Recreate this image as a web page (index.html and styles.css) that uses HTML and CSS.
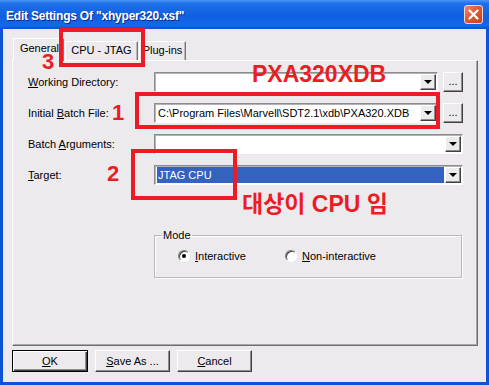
FILE: index.html
```html
<!DOCTYPE html>
<html lang="ko">
<head>
<meta charset="UTF-8">
<meta name="viewport" content="width=device-width, initial-scale=1.0">
<title>Edit Settings Of "xhyper320.xsf"</title>
<link rel="stylesheet" href="styles.css">
</head>
<body>
    <div class="window">
        <div class="titlebar">
            <span class="title">Edit Settings Of "xhyper320.xsf"</span>
            <span class="close">
                <svg width="11" height="11" viewBox="0 0 11 11">
                    <path d="M1.5 1.5 L9.5 9.5 M9.5 1.5 L1.5 9.5" stroke="#fff" stroke-width="2.2" stroke-linecap="round"/>
                </svg>
            </span>
        </div>

        <div class="frame">
            <div class="tabs">
                <div class="tab active">General</div>
                <div class="tab tab-cpu">CPU - JTAG</div>
                <div class="tab tab-plug">Plug-ins</div>
            </div>

            <div class="panel">
                <div class="row">
                    <label><u>W</u>orking Directory:</label>
                    <div class="combo"><span class="value"></span><span class="drop"></span></div>
                    <button class="more">...</button>
                </div>
                <div class="row">
                    <label>Initial <u>B</u>atch File:</label>
                    <div class="combo"><span class="value">C:\Program Files\Marvell\SDT2.1\xdb\PXA320.XDB</span><span class="drop"></span></div>
                    <button class="more">...</button>
                </div>
                <div class="row">
                    <label>Batch <u>A</u>rguments:</label>
                    <div class="combo"><span class="value"></span><span class="drop"></span></div>
                </div>
                <div class="row">
                    <label><u>T</u>arget:</label>
                    <div class="combo selected"><span class="value">JTAG CPU</span><span class="drop"></span></div>
                </div>

                <fieldset class="mode">
                    <legend>Mode</legend>
                    <div class="radios">
                        <div class="option first"><span class="radio checked"></span><u>I</u>nteractive</div>
                        <div class="option"><span class="radio"></span><u>N</u>on-interactive</div>
                    </div>
                </fieldset>
            </div>

            <div class="buttons">
                <button class="btn default"><u>O</u>K</button>
                <button class="btn"><u>S</u>ave As ...</button>
                <button class="btn"><u>C</u>ancel</button>
            </div>
        </div>

        <!-- annotations drawn over the screenshot -->
        <div class="mark box-tab"></div>
        <div class="mark box-batch"></div>
        <div class="mark box-target"></div>
        <span class="note num-3">3</span>
        <span class="note num-1">1</span>
        <span class="note num-2">2</span>
        <span class="note big pxa">PXA320XDB</span>
        <span class="note big kor">대상이 CPU 임</span>
    </div>
</body>
</html>
```

FILE: styles.css
```css
body {
    margin: 0;
    font-family: "Liberation Sans", Arial, sans-serif;
    font-size: 11px;
    color: #000;
}

.window {
    position: relative;
    width: 489px;
    height: 385px;
    display: flex;
    flex-direction: column;
    overflow: hidden;
    background: #edeaee;
}

.titlebar {
    height: 29px;
    flex: none;
    display: flex;
    align-items: center;
    justify-content: space-between;
    padding: 0 6px;
    background: linear-gradient(to bottom, #4a95f4 0, #1f70ea 12%, #0f5fe0 55%, #1468ea 88%, #0b4fd2 100%);
}

.title {
    color: #fff;
    font-weight: bold;
    font-size: 12px;
    margin-top: 3px;
    letter-spacing: -0.2px;
    text-shadow: 1px 1px 0 #0b2a8a;
}

.close {
    width: 17px;
    height: 17px;
    display: flex;
    align-items: center;
    justify-content: center;
    border: 1px solid #f4d8cf;
    border-radius: 3px;
    background: linear-gradient(135deg, #eb8a6a 0, #dd5a36 45%, #c8401e 100%);
}

.frame {
    flex: 1;
    box-sizing: border-box;
    border: 3px solid #0b54d8;
    border-top: 0;
    padding: 9px 8px 0 9px;
}

.tabs {
    display: flex;
    align-items: flex-end;
    height: 22px;
    padding-left: 1px;
    position: relative;
    z-index: 1;
}

.tab {
    box-sizing: border-box;
    height: 19px;
    line-height: 17px;
    text-align: center;
    border: 1px solid #fff;
    border-right-color: #7a7a7a;
    border-bottom: 0;
    box-shadow: inset -1px 0 0 #b8b6ba;
}

.tab.active {
    width: 51px;
    height: 23px;
    line-height: 18px;
    margin-bottom: -1px;
    padding-left: 2px;
    background: #edeaee;
}

.tab-cpu {
    width: 73px;
    margin-left: 1px;
}

.tab-plug {
    width: 47px;
    margin-left: 1px;
}

.panel {
    height: 286px;
    box-sizing: border-box;
    border: 1px solid #fff;
    border-right-color: #6e6e6e;
    border-bottom-color: #6e6e6e;
    box-shadow: inset -1px -1px 0 #a9a7ab;
    padding: 11px 14px 0 15px;
    display: flex;
    flex-direction: column;
    gap: 11px;
}

.row {
    display: flex;
    align-items: center;
    height: 20px;
}

.row label {
    width: 126px;
    flex: none;
}

.combo {
    flex: 1;
    height: 20px;
    box-sizing: border-box;
    display: flex;
    align-items: center;
    background: #fff;
    border: 1px solid;
    border-color: #8c8c8c #fff #fff #8c8c8c;
    box-shadow: inset 1px 1px 0 #b4b2b6;
    padding: 1px 1px 1px 2px;
}

.combo .value {
    flex: 1;
    height: 16px;
    line-height: 16px;
    padding-left: 1px;
    white-space: nowrap;
    overflow: hidden;
}

.combo.selected .value {
    background: #3462bf;
    color: #fff;
    margin-right: 1px;
}

.drop {
    width: 16px;
    height: 16px;
    flex: none;
    box-sizing: border-box;
    position: relative;
    background: #edeaee;
    border: 1px solid;
    border-color: #fff #404040 #404040 #fff;
    box-shadow: inset -1px -1px 0 #8c8c8c;
}

.drop::after {
    content: "";
    position: absolute;
    left: 3px;
    top: 5px;
    border-left: 4px solid transparent;
    border-right: 4px solid transparent;
    border-top: 4px solid #000;
}

.more {
    width: 20px;
    height: 20px;
    margin-left: 5px;
    padding: 0 0 2px;
    box-sizing: border-box;
    font-family: inherit;
    font-size: 11px;
    background: #edeaee;
    border: 1px solid;
    border-color: #fff #404040 #404040 #fff;
    box-shadow: inset -1px -1px 0 #8c8c8c;
}

.mode {
    width: 308px;
    height: 49px;
    box-sizing: border-box;
    margin: 33px 0 0 126px;
    padding: 0;
    border: 1px solid #b9b7bb;
    box-shadow: inset 1px 1px 0 #fff, 1px 1px 0 #fff;
}

.mode legend {
    margin-left: 7px;
    padding: 0 1px;
    line-height: 13px;
}

.radios {
    display: flex;
    margin-top: 7px;
    padding-left: 23px;
}

.option {
    display: flex;
    align-items: center;
    height: 13px;
}

.option.first {
    width: 107px;
}

.radio {
    width: 12px;
    height: 12px;
    box-sizing: border-box;
    margin-right: 5px;
    border-radius: 50%;
    border: 1px solid;
    border-color: #7c7c7c #fff #fff #7c7c7c;
    box-shadow: inset 1px 1px 0 #404040;
    background: #fff;
    position: relative;
}

.radio.checked::after {
    content: "";
    position: absolute;
    left: 3px;
    top: 3px;
    width: 4px;
    height: 4px;
    border-radius: 50%;
    background: #000;
}

.buttons {
    display: flex;
    gap: 7px;
    margin-top: 4px;
}

.btn {
    width: 75px;
    height: 22px;
    box-sizing: border-box;
    font-family: inherit;
    font-size: 11px;
    background: #edeaee;
    border: 1px solid;
    border-color: #fff #404040 #404040 #fff;
    box-shadow: inset -1px -1px 0 #8c8c8c;
}

.btn.default {
    width: 76px;
    border-color: #000;
    box-shadow: inset 1px 1px 0 #fff, inset -1px -1px 0 #404040, inset -2px -2px 0 #8c8c8c;
}

/* red annotations */
.mark {
    position: absolute;
    z-index: 2;
    box-sizing: border-box;
    border: 4px solid #ed1c24;
}

.box-tab {
    left: 59px;
    top: 28px;
    width: 86px;
    height: 39px;
}

.box-batch {
    left: 135px;
    top: 92px;
    width: 305px;
    height: 37px;
}

.box-target {
    left: 131px;
    top: 149px;
    width: 106px;
    height: 51px;
}

.note {
    position: absolute;
    z-index: 2;
    color: #ed1c24;
    font-weight: bold;
    font-size: 22px;
    line-height: 1;
}

.num-3 {
    left: 42px;
    top: 51px;
}

.num-1 {
    left: 112px;
    top: 102px;
}

.num-2 {
    left: 107px;
    top: 163px;
}

.big {
    font-family: "Liberation Sans", "Noto Sans CJK KR", sans-serif;
    font-size: 23px;
}

.pxa {
    left: 252px;
    top: 63px;
}

.kor {
    left: 242px;
    top: 193px;
}
```
